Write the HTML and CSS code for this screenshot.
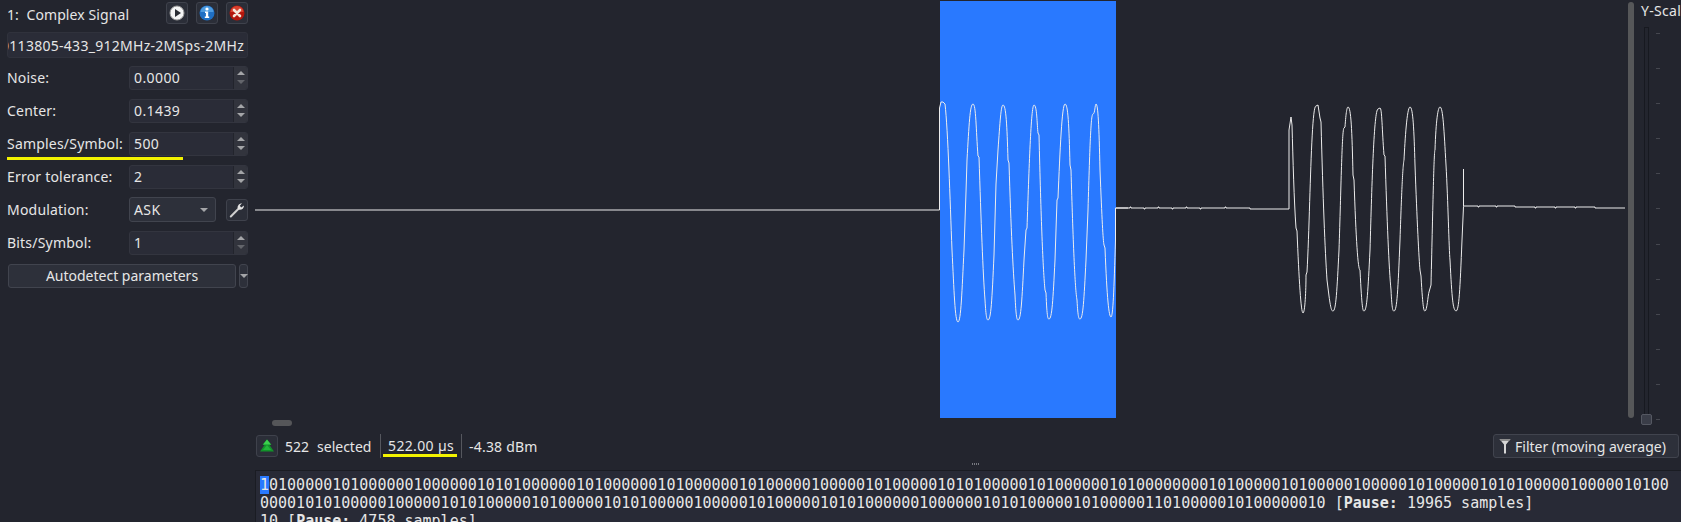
FILE: index.html
```html
<!doctype html>
<html lang="en">
<head>
	<meta charset="UTF-8">
	<title>Interpretation</title>
	<link rel="stylesheet" href="styles.css">
</head>
<body>
	<div class="app">
		<section class="panel">
			<div class="title-row">
				<span class="title">1:&nbsp; Complex Signal</span>
				<button class="tool tool-first">
					<svg width="16" height="16" viewBox="0 0 16 16"><circle cx="8" cy="8" r="7" fill="#f4f4f4"/><circle cx="8" cy="8" r="7" fill="none" stroke="#999" stroke-width="1"/><path d="M6 4 L12 8 L6 12 Z" fill="#2a2c33"/></svg>
				</button>
				<button class="tool">
					<svg width="16" height="16" viewBox="0 0 16 16"><circle cx="8" cy="8" r="7.5" fill="#1f6fc4"/><path d="M1.5 7 A6.5 6 0 0 1 14.5 7 Z" fill="#4d9be0"/><circle cx="8" cy="4" r="1.6" fill="#fff"/><path d="M6 6.5 H9.2 V11.4 H10.2 V13 H5.8 V11.4 H6.9 V8 H6 Z" fill="#fff"/></svg>
				</button>
				<button class="tool">
					<svg width="16" height="16" viewBox="0 0 16 16"><circle cx="8" cy="8" r="7.5" fill="#b3160c"/><path d="M1.5 7 A6.5 6 0 0 1 14.5 7 Z" fill="#d8422f"/><path d="M5 5 L11 11 M11 5 L5 11" stroke="#f6e6da" stroke-width="2.6" stroke-linecap="round"/></svg>
				</button>
			</div>
			<div class="name-field"><span class="name-text">0113805-433_912MHz-2MSps-2MHz</span></div>
			<div class="row">
				<span class="label">Noise:</span>
				<div class="spin"><span class="value">0.0000</span><span class="arrows"><i class="up"></i><i class="down off"></i></span></div>
			</div>
			<div class="row">
				<span class="label">Center:</span>
				<div class="spin"><span class="value">0.1439</span><span class="arrows"><i class="up"></i><i class="down"></i></span></div>
			</div>
			<div class="row">
				<span class="label">Samples/Symbol:</span>
				<div class="spin"><span class="value">500</span><span class="arrows"><i class="up"></i><i class="down"></i></span></div>
			</div>
			<div class="row">
				<span class="label">Error tolerance:</span>
				<div class="spin"><span class="value">2</span><span class="arrows"><i class="up"></i><i class="down"></i></span></div>
			</div>
			<div class="row">
				<span class="label">Modulation:</span>
				<div class="combo"><span class="value">ASK</span><i class="down"></i></div>
				<button class="tool wrench">
					<svg width="18" height="18" viewBox="0 0 18 18"><path d="M2.8 15.5 L10 8.2" stroke="#cfcfcf" stroke-width="2" stroke-linecap="round"/><path d="M10 8.5 C8.8 5.5 10.5 2.5 14 2.2 L11.8 4.8 L13.2 6.4 L16 4.4 C16 7.6 13.2 9.6 10 8.5 Z" fill="#e4e4e4"/></svg>
				</button>
			</div>
			<div class="row">
				<span class="label">Bits/Symbol:</span>
				<div class="spin"><span class="value">1</span><span class="arrows"><i class="up"></i><i class="down off"></i></span></div>
			</div>
			<div class="auto-row">
				<button class="auto-btn">Autodetect parameters</button>
				<button class="auto-menu"><i class="down"></i></button>
			</div>
			<div class="mark mark-samples"></div>
		</section>

		<main class="main">
			<div class="plot">
				<svg class="signal" width="1371" height="418" viewBox="255 0 1371 418">
					<rect x="940" y="1" width="176" height="417" fill="#2979ff"/>
					<path class="wave" d="M255 210 H939.5 V108 L941 102 L943 102 L945 104 C948 130 950 200 952 250 C954 290 955 322 958 322 C961 322 962 290 964 250 L966 192 L967 160 C969 125 970 104 973 104 C976 104 976 130 978 156 L979 157 C981 220 983 275 985 300 C986 318 987 320 988 320 C991 320 992 300 994 255 L996 184 L998 150 C1000 122 1001 105 1003 105 C1006 105 1007 125 1008 160 L1009 163 C1011 230 1013 270 1015 295 C1016 318 1017 320 1018 320 C1021 320 1022 300 1024 260 L1026 230 L1027 228 C1029 170 1031 105 1034 105 C1037 105 1037 125 1038 133 L1039 135 C1041 220 1043 270 1045 290 L1046 293 C1047 319 1048 319 1049 319 C1052 319 1053 300 1055 260 L1057 200 L1058 198 C1060 150 1062 104 1065 104 C1068 104 1069 125 1070 165 L1071 170 C1073 240 1075 290 1077 300 C1078 319 1079 319 1080 319 C1083 319 1084 300 1086 260 L1088 210 C1090 140 1091 114 1093 114 C1095 114 1095 104 1096 104 C1098 104 1099 125 1100 170 C1102 220 1103 240 1104 245 L1105 248 C1107 300 1109 317 1111 317 C1113 317 1114 290 1115.5 240 V208 H1128"/>
					<path class="wave" d="M1116 208 H1130 V207 H1131 V208 H1144 V209 H1145 V208 H1158 V207 H1159 V208 H1172 V209 H1173 V208 H1186 V207 H1187 V208 H1200 V209 H1201 V208 H1225 V207 H1226 V208 H1250 V209 H1251 V209 H1289 V130 L1291 117 L1292 125 C1293 160 1294 200 1296 228 L1297 231 C1299 280 1301 313 1303 313 C1305 313 1306 290 1306 275 L1307 272 C1310 220 1311 105 1316 106 L1318 105 L1320 118 L1321 122 C1323 200 1325 250 1327 280 L1329 296 C1331 311 1332 311 1333 311 C1336 311 1337 290 1339 250 C1341 190 1342 128 1344 128 L1345 127 C1346 112 1347 107 1348 107 C1351 107 1352 130 1353 175 L1354 180 C1356 240 1358 270 1360 270 C1362 311 1363 311 1364 311 C1367 311 1368 290 1370 250 C1372 180 1374 110 1378 109 L1380 108 C1382 108 1382 130 1384 155 L1385 156 C1387 220 1389 270 1391 290 C1392 311 1393 311 1394 311 C1397 311 1398 290 1400 240 C1402 180 1403 165 1404 160 C1405 140 1407 107 1410 107 C1413 107 1414 130 1415 165 C1417 220 1419 260 1420 270 L1421 276 C1423 311 1424 311 1425 311 C1427 311 1428 295 1429 292 L1431 285 C1433 200 1434 150 1435 150 C1436 120 1438 107 1440 107 C1443 107 1444 130 1446 165 C1448 200 1449 250 1450 260 C1452 300 1453 310 1456 311 C1459 311 1460 290 1462 240 L1463.5 206.5 V169 V206 H1478 V207 H1479 V206 H1496 V207 H1497 V206 H1515 V207 H1516 V207 H1535 V208 H1536 V207 H1555 V208 H1556 V207 H1575 V208 H1576 V207 H1595 V208 H1596 V208 H1625"/>
				</svg>
				<div class="vscroll"></div>
				<div class="yscale">
					<span class="yscale-label">Y-Scale</span>
					<div class="groove"></div>
					<div class="ticks"></div>
					<div class="knob"></div>
				</div>
			</div>
			<div class="hscroll"><span class="pill"></span></div>
			<div class="status">
				<button class="tool up-btn">
					<svg width="16" height="14" viewBox="0 0 16 14"><path d="M8 0.5 L12.5 6 H10.5 L15 12.5 H1 L5.5 6 H3.5 Z" fill="#12932a"/><path d="M8 0.5 L12 5.5 H4 Z" fill="#3ccf4f"/><path d="M8 6 L12 11 H4 Z" fill="#22b53a"/></svg>
				</button>
				<span class="stat-num">522</span>
				<span class="stat-sel">selected</span>
				<span class="stat-time">522.00 µs</span>
				<span class="stat-db">-4.38 dBm</span>
				<button class="filter-btn">
					<svg width="12" height="16" viewBox="0 0 12 16"><path d="M0.5 1 H11.5 L7 6.5 V15.5 H5 V6.5 Z" fill="#d6d6d6"/><path d="M0.5 1 H11.5 L10 3 H2 Z" fill="#8d8d8d"/></svg>
					Filter (moving average)
				</button>
			</div>
			<div class="splitter"><span class="grip"></span></div>
			<div class="bits">
				<div class="bit-line"><span class="sel">1</span>01000001010000001000000101010000001010000001010000001010000010000010100000101010000010100000010100000000101000001010000010000010100000101010000010000010100</div>
				<div class="bit-line">0000101010000010000010101000001010000010101000001000001010000010101000000100000010101000001010000011010000010100000010 [<b>Pause:</b> 19965 samples]</div>
				<div class="bit-line">10 [<b>Pause:</b> 4758 samples]</div>
			</div>
		</main>
	</div>
	<div class="mark mark-time"></div>
</body>
</html>
```

FILE: styles.css
```css
* {
	box-sizing: border-box;
}
html, body {
	margin: 0;
	height: 522px;
	overflow: hidden;
}
body {
	background-color: #23252e;
	color: #e6e6e6;
	font-family: "Noto Sans", sans-serif;
	font-size: 14px;
	position: relative;
}
button {
	font: inherit;
	color: inherit;
	padding: 0;
}
.app {
	display: flex;
	height: 522px;
}

/* left panel */
.panel {
	width: 255px;
	flex: none;
	padding: 2px 7px 0 7px;
}
.title-row {
	display: flex;
	align-items: center;
	gap: 8px;
	height: 22px;
}
.title {
	flex: 1;
	padding-top: 2px;
	letter-spacing: .1px;
}
.tool {
	width: 22px;
	height: 22px;
	flex: none;
	display: flex;
	align-items: center;
	justify-content: center;
	background: #2b2e38;
	border: 1px solid #3f424c;
	border-radius: 3px;
}
.name-field {
	height: 26px;
	margin-top: 8px;
	background: #2a2c37;
	border: 1px solid #30323c;
	border-radius: 3px;
	overflow: hidden;
	display: flex;
	align-items: center;
	justify-content: flex-end;
	padding-right: 3px;
	white-space: nowrap;
	letter-spacing: .28px;
}
.row {
	display: flex;
	align-items: center;
	height: 33px;
}
.name-field + .row {
	margin-top: 3px;
}
.label {
	width: 122px;
	flex: none;
	white-space: nowrap;
	letter-spacing: .2px;
}
.spin {
	width: 119px;
	height: 24px;
	display: flex;
	background: #2a2c37;
	border: 1px solid #33353f;
	border-radius: 3px;
	overflow: hidden;
}
.value {
	flex: 1;
	padding-left: 4px;
	line-height: 21px;
	letter-spacing: .4px;
}
.arrows {
	width: 14px;
	display: flex;
	flex-direction: column;
	align-items: center;
	justify-content: center;
	gap: 5px;
	background: #32343d;
	border-left: 1px solid #22242c;
}
.up, .down {
	display: block;
	width: 0;
	height: 0;
	border-left: 4px solid transparent;
	border-right: 4px solid transparent;
}
.up {
	border-bottom: 4px solid #a4a5a8;
}
.down {
	border-top: 4px solid #a4a5a8;
}
.down.off {
	border-top-color: #63656b;
}
.combo {
	width: 87px;
	height: 25px;
	display: flex;
	align-items: center;
	padding-right: 7px;
	background: #2d303a;
	border: 1px solid #41444e;
	border-radius: 3px;
}
.wrench {
	margin-left: 10px;
}
.auto-row {
	display: flex;
	gap: 3px;
	margin-top: 5px;
}
.auto-btn {
	width: 228px;
	height: 24px;
	margin-left: 1px;
	background: #2d303a;
	border: 1px solid #41444e;
	border-radius: 3px;
	line-height: 20px;
}
.auto-menu {
	width: 9px;
	height: 24px;
	display: flex;
	align-items: center;
	justify-content: center;
	background: #2d303a;
	border: 1px solid #41444e;
	border-radius: 3px;
}

/* yellow annotations over the capture */
.mark {
	position: absolute;
	height: 3px;
	background: #f2f200;
}
.mark-samples {
	left: 7px;
	top: 157px;
	width: 176px;
}
.mark-time {
	left: 383px;
	top: 454px;
	width: 74px;
}

/* main side */
.main {
	flex: 1;
	min-width: 0;
	display: flex;
	flex-direction: column;
}
.plot {
	height: 418px;
	display: flex;
	flex: none;
}
.signal {
	flex: none;
	display: block;
}
.wave {
	fill: none;
	stroke: #ececec;
	stroke-width: 1;
}
.vscroll {
	width: 6px;
	margin: 2px 0 0 2px;
	background: #565759;
	border-radius: 3px;
}
.yscale {
	flex: 1;
	position: relative;
}
.yscale-label {
	position: absolute;
	left: 7px;
	top: 1px;
	white-space: nowrap;
	letter-spacing: .3px;
}
.groove {
	position: absolute;
	left: 10px;
	top: 27px;
	height: 392px;
	width: 5px;
	border: 1px solid #171920;
	background: #23252e;
}
.knob {
	position: absolute;
	left: 7px;
	top: 414px;
	width: 11px;
	height: 11px;
	background: #3a3d48;
	border: 1px solid #555862;
	border-radius: 2px;
}
.ticks {
	position: absolute;
	left: 22px;
	top: 33px;
	width: 4px;
	height: 387px;
	background: repeating-linear-gradient(#45474f 0, #45474f 1px, transparent 1px, transparent 35.1px);
}
.hscroll {
	height: 16px;
	padding: 2px 0 0 17px;
}
.pill {
	display: block;
	width: 20px;
	height: 6px;
	border-radius: 3px;
	background: #555659;
}
.status {
	height: 24px;
	flex: none;
	display: flex;
	align-items: center;
	padding-left: 1px;
}
.up-btn {
	margin-right: 7px;
}
.stat-sel {
	margin-left: 8px;
	width: 63px;
}
.stat-time {
	width: 82px;
	height: 24px;
	line-height: 24px;
	padding-left: 7px;
	border-left: 1px solid #55575e;
	border-right: 1px solid #55575e;
	letter-spacing: .35px;
}
.stat-db {
	margin-left: 7px;
	letter-spacing: .2px;
}
.filter-btn {
	margin-left: auto;
	margin-right: 2px;
	width: 186px;
	height: 24px;
	display: flex;
	align-items: center;
	gap: 4px;
	padding-left: 5px;
	background: #2d303a;
	border: 1px solid #41444e;
	border-radius: 3px;
}
.splitter {
	height: 13px;
	flex: none;
	border-bottom: 1px solid #1a1c23;
	position: relative;
}
.grip {
	position: absolute;
	left: 717px;
	bottom: 5px;
	width: 8px;
	height: 2px;
	background: repeating-linear-gradient(90deg, #777980 0, #777980 1px, transparent 1px, transparent 2px);
}
.bits {
	flex: 1;
	background: #282a36;
	border-left: 1px solid #1a1c23;
	padding: 5px 0 0 4px;
	font-family: "DejaVu Sans Mono", monospace;
	font-size: 15px;
	line-height: 18px;
	overflow: hidden;
}
.bit-line {
	white-space: nowrap;
}
.sel {
	background: #2979ff;
}
```
